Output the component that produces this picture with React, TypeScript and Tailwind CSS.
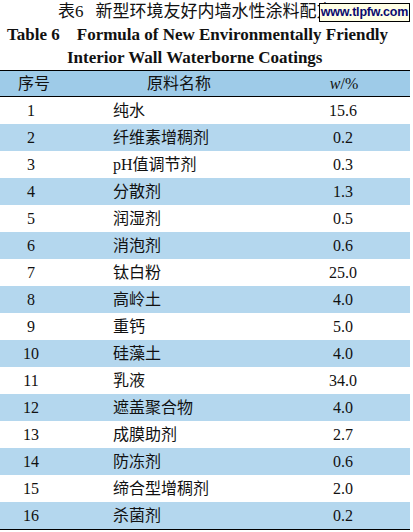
import React from "react";

const rows: [string, string, string][] = [
  ["1", "纯水", "15.6"],
  ["2", "纤维素增稠剂", "0.2"],
  ["3", "pH值调节剂", "0.3"],
  ["4", "分散剂", "1.3"],
  ["5", "润湿剂", "0.5"],
  ["6", "消泡剂", "0.6"],
  ["7", "钛白粉", "25.0"],
  ["8", "高岭土", "4.0"],
  ["9", "重钙", "5.0"],
  ["10", "硅藻土", "4.0"],
  ["11", "乳液", "34.0"],
  ["12", "遮盖聚合物", "4.0"],
  ["13", "成膜助剂", "2.7"],
  ["14", "防冻剂", "0.6"],
  ["15", "缔合型增稠剂", "2.0"],
  ["16", "杀菌剂", "0.2"],
];

const App = () => {
  return (
    <div className="relative w-[413px] h-[532px] bg-white text-[#111] font-['Liberation_Serif','Noto_Sans_CJK_SC',serif] overflow-hidden">
      {/* Watermark */}
      <div className="absolute left-[319px] top-[3px] w-[91px] h-[19px] border border-black bg-[#ffffe6] flex items-center justify-center">
        <span className="font-['Liberation_Sans',sans-serif] font-bold text-[12.5px] leading-none text-[#0a0a6e] tracking-[-0.2px]">
          www.tlpfw.com
        </span>
      </div>

      {/* Titles */}
      <div className="h-[70px] flex flex-col">
        <div className="h-[23px] flex items-center pl-[58px] text-[17px] leading-none">
          <span>表6</span>
          <span className="ml-[12px]">新型环境友好内墙水性涂料配方</span>
        </div>
        <div className="h-[22px] flex items-center pl-[7px] font-bold text-[17px] leading-none whitespace-pre">
          {"Table 6    Formula of New Environmentally Friendly"}
        </div>
        <div className="h-[24px] flex items-center pl-[67px] font-bold text-[17px] leading-none">
          Interior Wall Waterborne Coatings
        </div>
      </div>

      {/* Table */}
      <div className="w-[410px] border-t-[1.5px] border-b-[1.5px] border-black">
        <div className="grid grid-cols-[62px_234px_94px] h-[26px] items-center bg-[#9ecbe8] border-b-[1.5px] border-black text-[16px] leading-none">
          <div className="text-center pl-[6px]">序号</div>
          <div className="text-center">原料名称</div>
          <div className="text-center pl-[2px]">
            <span className="italic">w</span>/%
          </div>
        </div>
        {rows.map(([n, name, v], i) => (
          <div
            key={n}
            className={
              "grid grid-cols-[62px_234px_94px] h-[27px] items-center text-[16px] leading-none " +
              (i % 2 === 1 ? "bg-[#b4d7ee]" : "bg-white")
            }
          >
            <div className="text-center">{n}</div>
            <div className="pl-[51px]">{name}</div>
            <div className="text-center">{v}</div>
          </div>
        ))}
      </div>
    </div>
  );
};

export default App;
